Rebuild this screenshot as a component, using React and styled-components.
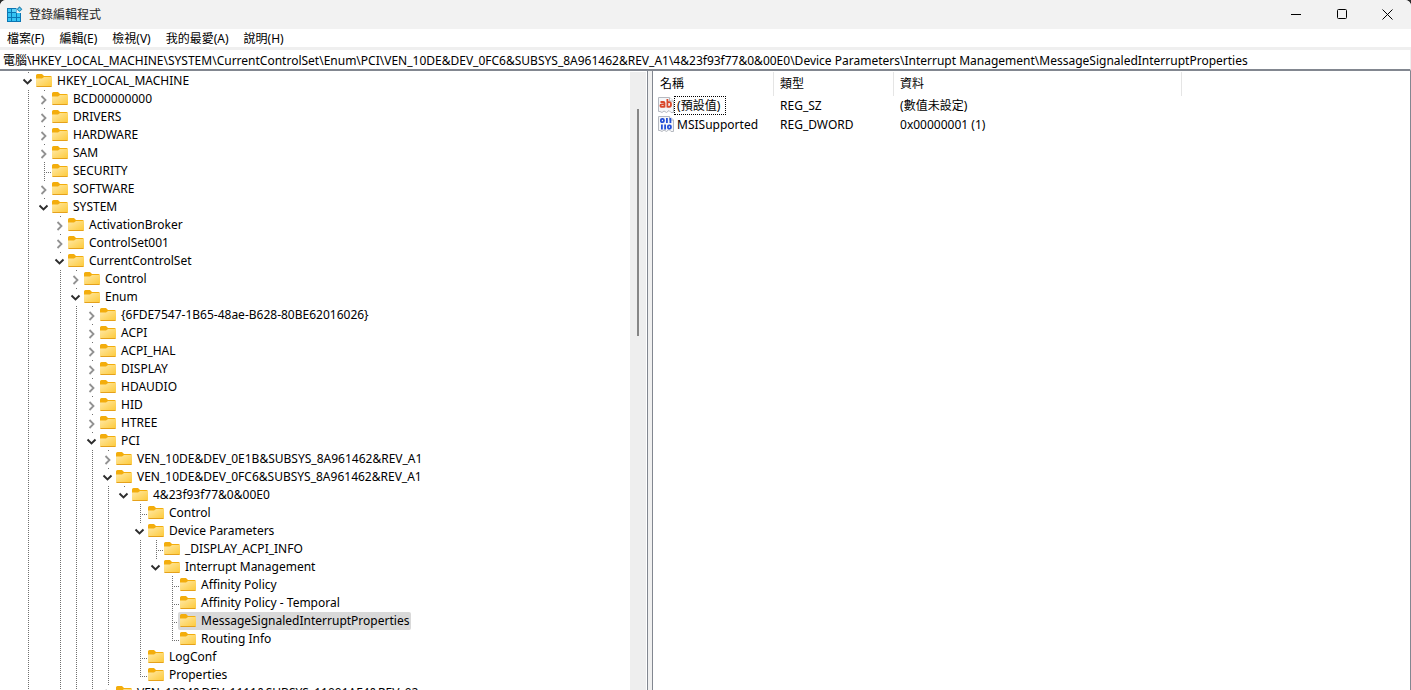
import React from 'react';
import styled, { createGlobalStyle, css } from 'styled-components';

const GlobalStyle = createGlobalStyle`
  *, *::before, *::after { box-sizing: border-box; }
  body { margin: 0; background: #2b2b2b; }
  body, button, input, table {
    font-family: "Noto Sans", "Noto Sans CJK TC", sans-serif;
    font-size: 12px;
    color: #000;
  }
  button { border: 0; padding: 0; background: none; }
`;

const Window = styled.main`
  display: flex;
  flex-direction: column;
  height: 100vh;
  overflow: hidden;
  background: #fff;
  border-radius: 6px 6px 0 0;
`;

/* Title bar */
const TitleBar = styled.header`
  display: flex;
  align-items: center;
  flex: none;
  height: 29px;
  padding-left: 6px;
  background: #f2f2f2;
`;

const Title = styled.h1`
  flex: 1;
  margin: 0 0 0 6px;
  font-size: 12px;
  font-weight: 400;
  line-height: 16px;
  color: #222;
`;

const CaptionButton = styled.button`
  display: grid;
  place-items: center;
  width: 46px;
  height: 26px;
  &:hover { background: ${p => (p.$danger ? '#e81123' : '#e2e2e2')}; }
`;

/* Menu and address bars */
const MenuBar = styled.nav`
  display: flex;
  flex: none;
  gap: 1px;
  height: 18px;
`;

const MenuButton = styled.button`
  padding: 0 7px;
  line-height: 20px;
  white-space: nowrap;
  &:hover { background: #e5f3ff; }
`;

const AddressBar = styled.div`
  flex: none;
  height: 24px;
  border: solid #efefef;
  border-width: 3px 1px 0 0;
  border-bottom: 2px solid #828790;
`;

const AddressInput = styled.input`
  display: block;
  width: 100%;
  height: 19px;
  border: 0;
  padding: 0 3px;
  background: transparent;
  outline: none;
`;

/* Panes */
const Panes = styled.div`
  display: grid;
  grid-template-columns: minmax(0, 35fr) 6px minmax(0, 41fr);
  flex: 1;
  min-height: 0;
`;

const TreePane = styled.section`
  display: flex;
  min-height: 0;
  padding: 1px 1px 0 0;
  overflow: hidden;
`;

const Tree = styled.ul`
  flex: 1;
  min-width: 0;
  margin: 0;
  padding: 0;
  list-style: none;
  overflow: hidden;
`;

const Branch = styled.ul`
  margin: 0;
  padding: 0;
  list-style: none;
`;

const TreeRow = styled.div`
  display: flex;
  height: 18px;
  padding-left: 20px;
`;

const dotsDown = 'repeating-linear-gradient(to bottom, #6f6f6f 0 1px, transparent 1px 2px)';
const dotsAcross = 'repeating-linear-gradient(to right, #6f6f6f 0 1px, transparent 1px 2px)';

const guides = {
  none: css``,
  top: css`
    background: ${dotsDown} 8px 0 / 1px 1px no-repeat;
  `,
  line: css`
    background: ${dotsDown} 8px 0 / 1px 18px no-repeat;
  `,
  tee: css`
    background: ${dotsDown} 8px 0 / 1px 18px no-repeat, ${dotsAcross} 8px 10px / 8px 1px no-repeat;
  `,
  corner: css`
    background: ${dotsDown} 8px 0 / 1px 11px no-repeat, ${dotsAcross} 8px 10px / 8px 1px no-repeat;
  `,
};

const Guide = styled.span`
  flex: none;
  width: 16px;
  height: 18px;
  ${p => guides[p.$kind]}
`;

const Toggle = styled.button`
  flex: none;
  width: 16px;
  height: 18px;
  ${guides.top}
  svg { display: block; }
`;

const KeyButton = styled.button`
  display: flex;
  align-items: center;
  gap: 5px;
  height: 18px;
  margin-left: -2px;
  padding: 0 2px;
  border-radius: 2px;
  line-height: 18px;
  white-space: nowrap;
  background: ${p => (p.$selected ? '#d9d9d9' : 'transparent')};
  svg { flex: none; }
`;

const ScrollTrack = styled.div`
  flex: none;
  display: flex;
  justify-content: center;
  width: 16px;
  padding-top: 37px;
  background: #eee;
`;

const ScrollThumb = styled.div`
  width: 2px;
  height: 39%;
  background: #868686;
`;

const Splitter = styled.div`
  border: solid #828790;
  border-width: 0 1px;
  background: #f0f0f0;
`;

const ValuePane = styled.section`
  padding-top: 1px;
  border-right: 1px solid #828790;
  overflow: hidden;
`;

const ValueTable = styled.table`
  width: 100%;
  table-layout: fixed;
  border-collapse: separate;
  border-spacing: 0;
`;

const Column = styled.col`
  width: ${p => p.$width};
`;

const HeadCell = styled.th`
  height: 24px;
  padding: 0 6px;
  border-right: ${p => (p.$last ? 0 : '1px solid #e5e5e5')};
  font-weight: 400;
  line-height: 18px;
  text-align: left;
  &:first-child { padding-left: 7px; }
`;

const Cell = styled.td`
  height: 19px;
  padding: 0 6px;
  line-height: 19px;
  white-space: nowrap;
`;

const NameCell = styled(Cell)`
  padding: 0 0 0 5px;
`;

const ValueName = styled.button`
  display: flex;
  align-items: center;
  height: 19px;
  svg { flex: none; }
`;

const NameText = styled.span`
  height: 19px;
  padding: 0 ${p => (p.$focused ? 5 : 1)}px 0 2px;
  border: 1px dotted ${p => (p.$focused ? '#000' : 'transparent')};
  line-height: 17px;
`;

/* Drawings */
function RegistryIcon() {
  return (
    <svg width="17" height="17" viewBox="0 0 17 17" aria-hidden="true">
      <path d="M1 2h10v4h4v10H1z" fill="#0b76b4" />
      <g fill="#35c3f3">
        <rect x="2" y="3" width="3" height="3" />
        <rect x="6" y="3" width="4" height="3" fill="#5fd3f8" />
        <rect x="2" y="7" width="3" height="4" />
        <rect x="6" y="7" width="4" height="4" />
        <rect x="11" y="7" width="3" height="4" />
        <rect x="2" y="12" width="3" height="3" />
        <rect x="6" y="12" width="4" height="3" />
        <rect x="11" y="12" width="3" height="3" />
      </g>
      <path d="M10.500 2h1v4h4v1h-5z" fill="#f2f2f2" />
      <path d="M13.500 0.300l2.900 2.900-2.900 2.900-2.900-2.900z" fill="#2a86b4" />
      <path d="M13.500 1.700l1.500 1.500-1.500 1.500-1.500-1.500z" fill="#5fd3f8" />
    </svg>
  );
}

function FolderIcon() {
  return (
    <svg width="16" height="18" viewBox="0 0 16 18" aria-hidden="true">
      <defs>
        <linearGradient id="folderFace" x1="0" y1="0" x2="1" y2="1">
          <stop offset="0" stopColor="#ffe9a6" />
          <stop offset="1" stopColor="#fdc937" />
        </linearGradient>
      </defs>
      <path d="M0 3.500Q0 2 1.500 2H6L8 4H14.500Q16 4 16 5.500V8H0z" fill="#f3ad0c" />
      <path d="M0 6.500H6L8 5H16V13.500Q16 15 14.500 15H1.500Q0 15 0 13.500z" fill="url(#folderFace)" />
      <path d="M0.500 14.500H15.500" stroke="#e5a11b" />
    </svg>
  );
}

function Chevron({ open }) {
  return (
    <svg width="16" height="18" viewBox="0 0 16 18" fill="none" aria-hidden="true">
      {open
        ? <path d="M3.500 7.500L7.500 11.500L11.500 7.500" stroke="#2d2d2d" strokeWidth="1.900" />
        : <path d="M5.500 6L9.500 10L5.500 14" stroke="#929292" strokeWidth="1.800" />}
    </svg>
  );
}

function ValueIcon({ binary }) {
  return (
    <svg width="16" height="17" viewBox="0 0 16 17" aria-hidden="true">
      <path d="M0.500 0.500H11.500L15.500 4V15.500H13L11 13.500L8.500 15.500L6 14L4 15.500L2 14.500H0.500z" fill="#f5f6f8" stroke="#b5b9c0" />
      <path d="M11.500 0.500V4H15.500" fill="#fff" stroke="#b5b9c0" />
      {binary ? (
        <g fill="none" stroke="#2450d8" strokeWidth="1.800">
          <rect x="2.900" y="2.900" width="3" height="3.300" rx="1.200" />
          <path d="M8.900 2v5M12.400 2v5" />
          <path d="M3.900 8.500v5M7.100 8.500v5" />
          <rect x="9.900" y="9.300" width="3" height="3.300" rx="1.200" />
        </g>
      ) : (
        <g fill="none" stroke="#d9482b" strokeWidth="1.800">
          <path d="M2.500 5H5.500Q6.500 5 6.500 6V10.500M6.500 7.300H3.800Q2.400 7.300 2.400 8.600T3.800 9.900H6.500" />
          <path d="M9.400 2V10.500M9.400 5.200H11.200Q13 5.200 13 7.500T11.200 9.800H9.400" />
        </g>
      )}
    </svg>
  );
}

/* Registry keys: `open` is true for expanded, false for collapsed, absent for a key with no subkeys */
const closed = name => ({ name, open: false });
const leaf = name => ({ name });

const keys = [
  {
    name: 'HKEY_LOCAL_MACHINE', open: true, more: true, children: [
      closed('BCD00000000'),
      closed('DRIVERS'),
      closed('HARDWARE'),
      closed('SAM'),
      leaf('SECURITY'),
      closed('SOFTWARE'),
      {
        name: 'SYSTEM', open: true, children: [
          closed('ActivationBroker'),
          closed('ControlSet001'),
          {
            name: 'CurrentControlSet', open: true, more: true, children: [
              closed('Control'),
              {
                name: 'Enum', open: true, more: true, children: [
                  closed('{6FDE7547-1B65-48ae-B628-80BE62016026}'),
                  closed('ACPI'),
                  closed('ACPI_HAL'),
                  closed('DISPLAY'),
                  closed('HDAUDIO'),
                  closed('HID'),
                  closed('HTREE'),
                  {
                    name: 'PCI', open: true, more: true, children: [
                      closed('VEN_10DE&DEV_0E1B&SUBSYS_8A961462&REV_A1'),
                      {
                        name: 'VEN_10DE&DEV_0FC6&SUBSYS_8A961462&REV_A1', open: true, children: [
                          {
                            name: '4&23f93f77&0&00E0', open: true, children: [
                              leaf('Control'),
                              {
                                name: 'Device Parameters', open: true, children: [
                                  leaf('_DISPLAY_ACPI_INFO'),
                                  {
                                    name: 'Interrupt Management', open: true, children: [
                                      leaf('Affinity Policy'),
                                      leaf('Affinity Policy - Temporal'),
                                      { name: 'MessageSignaledInterruptProperties', selected: true },
                                      leaf('Routing Info'),
                                    ],
                                  },
                                ],
                              },
                              leaf('LogConf'),
                              leaf('Properties'),
                            ],
                          },
                        ],
                      },
                      closed('VEN_1234&DEV_1111&SUBSYS_11001AF4&REV_02'),
                    ],
                  },
                ],
              },
            ],
          },
        ],
      },
    ],
  },
];

function KeyNode({ node, trail, isLast }) {
  const expandable = node.open !== undefined;
  const continues = !isLast || Boolean(node.more);
  return (
    <li role="treeitem" aria-expanded={node.open} aria-selected={Boolean(node.selected)}>
      <TreeRow>
        {trail.map((on, i) => <Guide key={i} $kind={on ? 'line' : 'none'} />)}
        {expandable
          ? <Toggle type="button" aria-label={`${node.open ? '摺疊' : '展開'} ${node.name}`}><Chevron open={node.open} /></Toggle>
          : <Guide $kind={continues ? 'tee' : 'corner'} />}
        <KeyButton type="button" $selected={node.selected}>
          <FolderIcon />
          {node.name}
        </KeyButton>
      </TreeRow>
      {node.children && (
        <Branch role="group">
          {node.children.map((child, i) => (
            <KeyNode
              key={child.name}
              node={child}
              trail={[...trail, continues]}
              isLast={i === node.children.length - 1}
            />
          ))}
        </Branch>
      )}
    </li>
  );
}

const menus = ['檔案(F)', '編輯(E)', '檢視(V)', '我的最愛(A)', '說明(H)'];

const values = [
  { name: '(預設值)', type: 'REG_SZ', data: '(數值未設定)', focused: true },
  { name: 'MSISupported', type: 'REG_DWORD', data: '0x00000001 (1)', binary: true },
];

const path = '電腦\\HKEY_LOCAL_MACHINE\\SYSTEM\\CurrentControlSet\\Enum\\PCI\\VEN_10DE&DEV_0FC6&SUBSYS_8A961462&REV_A1\\4&23f93f77&0&00E0\\Device Parameters\\Interrupt Management\\MessageSignaledInterruptProperties';

export default function App() {
  return (
    <>
      <GlobalStyle />
      <Window>
        <TitleBar>
          <RegistryIcon />
          <Title>登錄編輯程式</Title>
          <CaptionButton type="button" aria-label="最小化">
            <svg width="12" height="11" viewBox="0 0 12 11"><path d="M1 5.500H11" stroke="#000" /></svg>
          </CaptionButton>
          <CaptionButton type="button" aria-label="最大化">
            <svg width="11" height="11" viewBox="0 0 11 11"><rect x="0.500" y="0.500" width="9" height="9" rx="1" fill="none" stroke="#000" /></svg>
          </CaptionButton>
          <CaptionButton type="button" aria-label="關閉" $danger>
            <svg width="12" height="11" viewBox="0 0 12 11"><path d="M0.500 0.500L10.500 10.500M10.500 0.500L0.500 10.500" stroke="#000" /></svg>
          </CaptionButton>
        </TitleBar>
        <MenuBar>
          {menus.map(m => <MenuButton key={m} type="button">{m}</MenuButton>)}
        </MenuBar>
        <AddressBar>
          <AddressInput aria-label="位址" defaultValue={path} spellCheck={false} />
        </AddressBar>
        <Panes>
          <TreePane>
            <Tree role="tree" aria-label="登錄機碼">
              {keys.map(k => <KeyNode key={k.name} node={k} trail={[]} isLast />)}
            </Tree>
            <ScrollTrack><ScrollThumb /></ScrollTrack>
          </TreePane>
          <Splitter />
          <ValuePane>
            <ValueTable>
              <colgroup>
                <Column $width="121px" />
                <Column $width="120px" />
                <Column $width="288px" />
                <Column $width="auto" />
              </colgroup>
              <thead>
                <tr>
                  <HeadCell scope="col">名稱</HeadCell>
                  <HeadCell scope="col">類型</HeadCell>
                  <HeadCell scope="col">資料</HeadCell>
                  <HeadCell as="td" $last />
                </tr>
              </thead>
              <tbody>
                {values.map(v => (
                  <tr key={v.name}>
                    <NameCell>
                      <ValueName type="button">
                        <ValueIcon binary={v.binary} />
                        <NameText $focused={v.focused}>{v.name}</NameText>
                      </ValueName>
                    </NameCell>
                    <Cell>{v.type}</Cell>
                    <Cell>{v.data}</Cell>
                    <Cell />
                  </tr>
                ))}
              </tbody>
            </ValueTable>
          </ValuePane>
        </Panes>
      </Window>
    </>
  );
}
